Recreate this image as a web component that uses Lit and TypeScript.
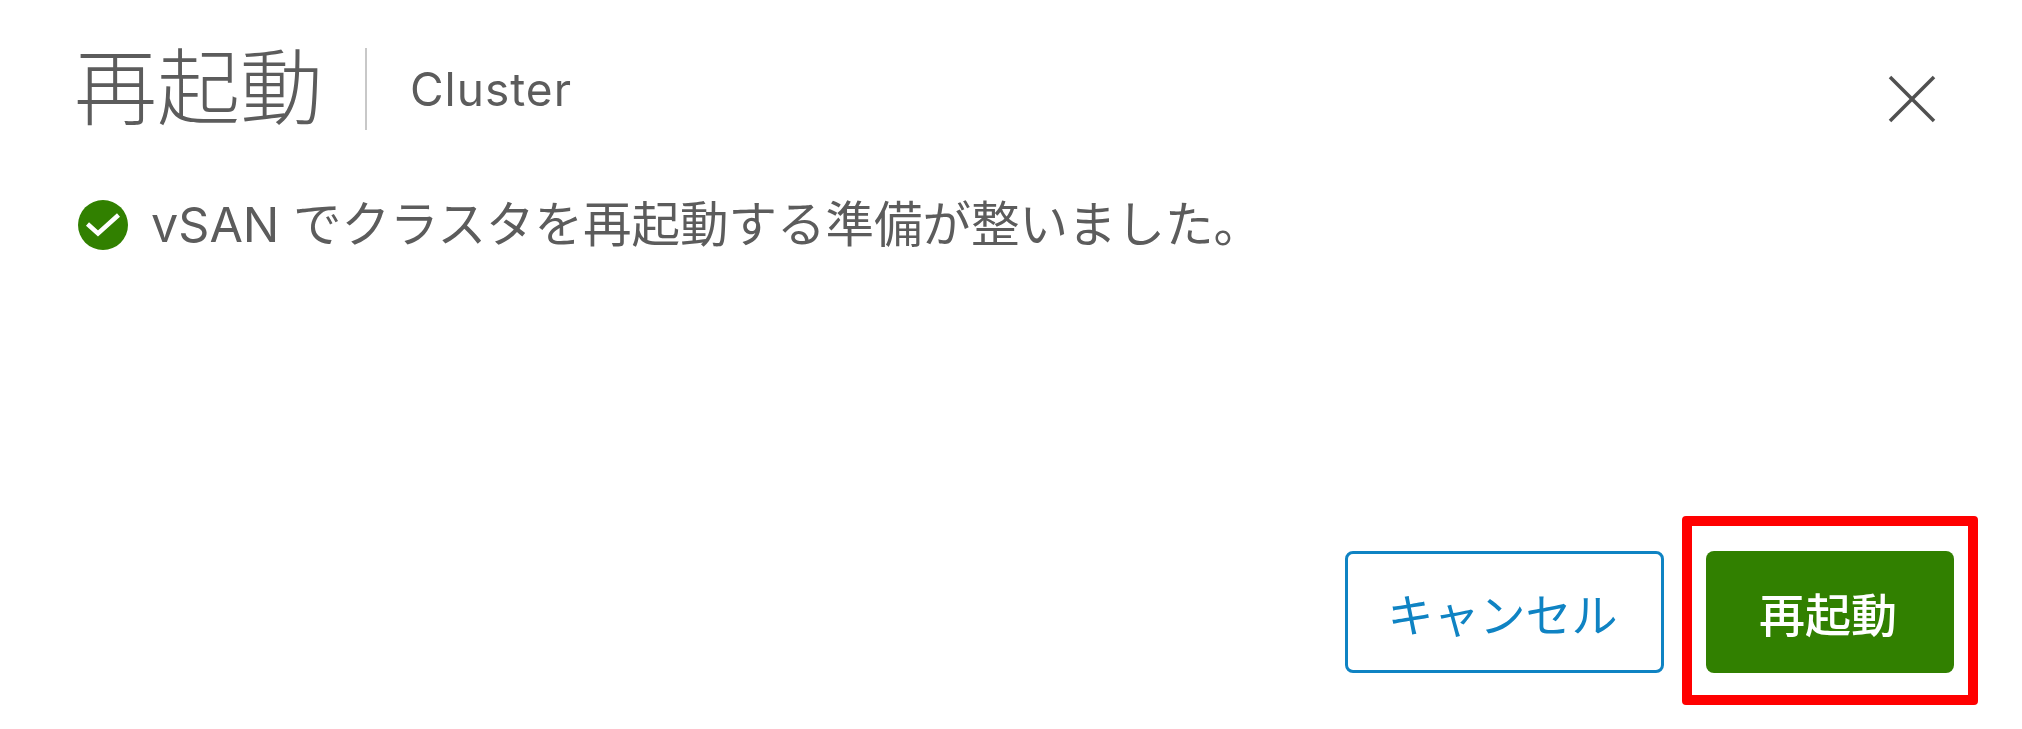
import { LitElement, html, css } from "lit";
import { customElement } from "lit/decorators.js";

@customElement("app-root")
export class AppRoot extends LitElement {
  static styles = css`
    :host {
      display: flex;
      flex-direction: column;
      box-sizing: border-box;
      width: 2022px;
      height: 729px;
      padding: 48px 68px 56px 77px;
      background: #fff;
      color: #5c5c5c;
      font-family: "Inter", "Noto Sans CJK JP", sans-serif;
    }
    .header {
      display: flex;
      align-items: center;
      height: 82px;
    }
    .title {
      font-family: "Noto Sans CJK JP", sans-serif;
      font-size: 83px;
      font-weight: 300;
      line-height: 82px;
      margin: 0 0 14px -3px;
      filter: blur(0.7px);
    }
    .divider {
      width: 2px;
      height: 82px;
      margin: 0 43px 0 42px;
      background: #c8c8c8;
    }
    .sub {
      font-size: 46px;
      letter-spacing: 1px;
      line-height: 1;
      filter: blur(0.7px);
    }
    .close {
      margin-left: auto;
      margin-top: 20px;
      margin-right: 18px;
      width: 48px;
      height: 48px;
      flex: none;
      filter: blur(0.7px);
    }
    .message {
      display: flex;
      align-items: center;
      gap: 23px;
      margin-top: 65px;
      padding-left: 1px;
      font-size: 48.5px;
      line-height: 60px;
      white-space: nowrap;
    }
    .message span { filter: blur(0.7px); }
    .check { width: 50px; height: 50px; flex: none; }
    .footer {
      margin-top: auto;
      display: flex;
      justify-content: flex-end;
      gap: 42px;
    }
    button {
      box-sizing: border-box;
      height: 122px;
      border-radius: 8px;
      font-family: "Noto Sans CJK JP", sans-serif;
      font-size: 46px;
      padding: 0 4px 0 0;
    }
    .label { display: inline-block; filter: blur(0.6px); }
    .cancel {
      width: 319px;
      background: #fff;
      border: 3px solid #0f83c3;
      color: #0f83c3;
    }
    .confirm-wrap { position: relative; display: flex; }
    .confirm {
      width: 248px;
      background: #318000;
      border: none;
      color: #fff;
      font-weight: 500;
    }
    .highlight {
      position: absolute;
      inset: -35px -24px -32px -24px;
      border: 10px solid #ff0000;
      border-radius: 4px;
      pointer-events: none;
    }
  `;

  render() {
    return html`
      <div class="header">
        <div class="title">再起動</div>
        <div class="divider"></div>
        <div class="sub">Cluster</div>
        <svg class="close" viewBox="0 0 48 48" fill="none" stroke="#505050" stroke-width="3.5">
          <line x1="2" y1="2" x2="46" y2="46"></line>
          <line x1="46" y1="2" x2="2" y2="46"></line>
        </svg>
      </div>
      <div class="message">
        <svg class="check" viewBox="0 0 50 50">
          <circle cx="25" cy="25" r="25" fill="#318000"></circle>
          <path d="M9.5 24 L20 33.5 L40.5 15" fill="none" stroke="#fff" stroke-width="4.5"></path>
        </svg>
        <span>vSAN でクラスタを再起動する準備が整いました。</span>
      </div>
      <div class="footer">
        <button class="cancel"><span class="label">キャンセル</span></button>
        <div class="confirm-wrap">
          <button class="confirm"><span class="label">再起動</span></button>
          <span class="highlight"></span>
        </div>
      </div>
    `;
  }
}
